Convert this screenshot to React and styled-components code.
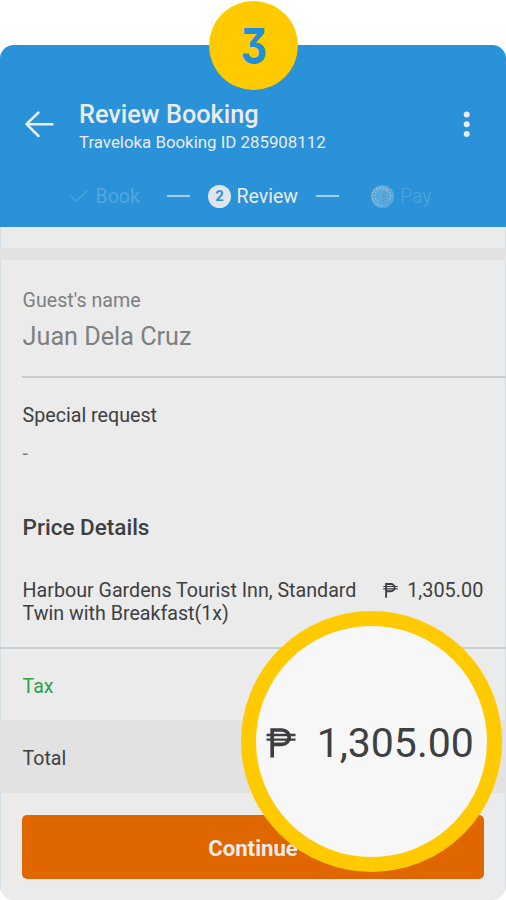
import styled, { createGlobalStyle } from 'styled-components'

const GlobalStyle = createGlobalStyle`
  * { box-sizing: border-box; }
  body {
    margin: 0;
    background: #fff;
    font-family: Roboto, "Liberation Sans", sans-serif;
  }
`

const Page = styled.div`
  position: relative;
  width: 506px;
  height: 900px;
  padding-top: 45px;
  overflow: hidden;
`

const Phone = styled.main`
  display: flex;
  flex-direction: column;
  height: 855px;
  border-radius: 14px;
  overflow: hidden;
  background: #ebebeb;
  color: #3d3f41;
`

const Header = styled.header`
  height: 182px;
  padding-top: 55px;
  background: #2992d9;
  color: #ebebeb;
`

const Content = styled.div`
  flex: 1;
  display: flex;
  flex-direction: column;
  box-shadow: inset 1px 0 #d5dfe8, inset -1px 0 #d5dfe8;
`

const TopBar = styled.div`
  display: flex;
  align-items: flex-start;
  padding: 0 35px 0 24px;
  height: 81px;
`

const BackIcon = styled.svg`
  width: 31px;
  height: 28px;
  margin: 10px 24px 0 0;
`

const Titles = styled.div`
  flex: 1;
`

const Title = styled.h1`
  margin: 0;
  font-size: 25.3px;
  line-height: 29px;
  font-weight: 500;
`

const BookingId = styled.div`
  font-size: 16.85px;
  line-height: 27px;
`

const MenuIcon = styled.svg`
  width: 8px;
  height: 28px;
  margin-top: 10px;
`

const Steps = styled.div`
  display: flex;
  align-items: center;
  height: 30px;
  padding-left: 70px;
  font-size: 19.5px;
`

const Step = styled.div`
  display: flex;
  align-items: center;
  gap: ${props => props.gap || 5.5}px;
  width: ${props => props.width}px;
  color: ${props => props.dim ? '#50a6df' : '#ebebeb'};
  font-weight: ${props => props.thin ? 300 : 400};
`

const StepNumber = styled.span`
  width: 23px;
  height: 23px;
  border-radius: 50%;
  background: #dfe5ea;
  color: #2992d9;
  font-size: 15px;
  line-height: 23px;
  font-weight: 700;
  text-align: center;
`

const Dash = styled.span`
  width: 23px;
  height: 2px;
  margin: 0 ${props => props.after}px 1px 0;
  background: #a9cfeb;
`

const Band = styled.div`
  height: 12px;
  margin-top: 21px;
  background: #e2e2e2;
`

const Guest = styled.section`
  height: 118px;
  margin-left: 22px;
  padding: 28px 0 0 0.6px;
  border-bottom: 2px solid #c8cdd1;
  color: #7d8081;
`

const Text = styled.div`
  font-size: ${props => props.size || 19.65}px;
  line-height: ${props => props.line || 25}px;
  font-weight: ${props => props.weight || 400};
  color: ${props => props.color || 'inherit'};
`

const Request = styled.section`
  height: 123px;
  padding: 25px 22.6px 0;
`

const Price = styled.section`
  height: 148px;
  padding: 13px 22.6px 0;
  border-bottom: 2px solid #c3d0da;
`

const PriceRow = styled.div`
  display: flex;
  justify-content: space-between;
  margin-top: 38px;
  font-size: 19.65px;
  line-height: 23px;
`

const RoomName = styled.div`
  width: 345px;
`

const Amount = styled.div`
  display: flex;
  align-items: center;
  gap: ${props => props.gap}px;
  height: 23px;
  font-size: ${props => props.size}px;
  white-space: nowrap;
`

const Peso = styled.svg`
  width: ${props => props.w}px;
  height: ${props => props.h}px;
`

const SummaryRow = styled.div`
  display: flex;
  align-items: center;
  height: ${props => props.h}px;
  padding: 3px 22.6px 0;
  font-size: 19.5px;
  background: ${props => props.shade ? '#e2e2e2' : 'transparent'};
  color: ${props => props.shade ? 'inherit' : '#2ba148'};
`

const Continue = styled.button`
  height: 64px;
  margin: 22px 22px 0 22px;
  padding: 2px 0 0;
  border: 0;
  border-radius: 5px;
  background: #e06600;
  color: #ebebeb;
  font: 700 22.2px Roboto, "Liberation Sans", sans-serif;
`

const StepBadge = styled.div`
  position: absolute;
  top: 1px;
  left: 209px;
  width: 89px;
  height: 89px;
  border-radius: 50%;
  background: #ffcb00;
  color: #1f8fd8;
  font-family: Inter, sans-serif;
  font-feature-settings: "cv09";
  font-size: 49px;
  line-height: 91px;
  font-weight: 700;
  text-align: center;
`

const BadgeNumber = styled.span`
  display: inline-block;
  transform: scaleX(0.84);
`

// magnifier over the total
const Magnifier = styled.div`
  position: absolute;
  top: 611px;
  left: 241px;
  display: flex;
  align-items: center;
  justify-content: center;
  width: 261px;
  height: 261px;
  padding: 2px 3px 0 0;
  border: 15px solid #ffcb00;
  border-radius: 50%;
  background: #f7f7f7;
  color: #3d3f41;
`

function PesoSign({ w, h }) {
  return (
    <Peso w={w} h={h} viewBox="0 0 30 30" fill="none" stroke="#3d3f41">
      <path d="M6.2 29.5V2H16a7.2 7.2 0 0 1 0 14.4H6" strokeWidth="3.7" />
      <path d="M0.5 7H29.5M0.5 11.6H29.5" strokeWidth="2.4" />
    </Peso>
  )
}

function App() {
  return (
    <Page>
      <GlobalStyle />
      <Phone>
        <Header>
          <TopBar>
            <BackIcon viewBox="0 0 31 28" fill="none" stroke="#ebebeb" strokeWidth="2.5">
              <path d="M14.5 2.5 2.5 14.2 14.5 26M2.5 14.2H28.5" strokeLinecap="round" strokeLinejoin="round" />
            </BackIcon>
            <Titles>
              <Title>Review Booking</Title>
              <BookingId>Traveloka Booking ID 285908112</BookingId>
            </Titles>
            <MenuIcon viewBox="0 0 8 28" fill="#ebebeb">
              <circle cx="3.7" cy="4.5" r="3" />
              <circle cx="3.7" cy="14.2" r="3" />
              <circle cx="3.7" cy="24" r="3" />
            </MenuIcon>
          </TopBar>
          <Steps>
            <Step dim width={97} gap={7.5}>
              <svg width="18" height="14" viewBox="0 0 18 14" fill="none" stroke="#50a6df">
                <path d="M1 7 6.3 12.2 16.8 2" strokeWidth="1.3" />
              </svg>
              Book
            </Step>
            <Dash after={18} />
            <Step width={108}>
              <StepNumber>2</StepNumber>
              Review
            </Step>
            <Dash after={32} />
            <Step dim thin gap={6}>
              <svg width="23" height="23" viewBox="0 0 23 23">
                <circle cx="11.5" cy="11.5" r="11.5" fill="#59a9df" />
                <g fill="none" stroke="#d2cdc8" strokeWidth="1.2" strokeDasharray="0.1 3" strokeLinecap="round">
                  <path d="M19 14A9.2 9.2 0 1 0 11 20.5" />
                  <path d="M15.5 5.5A6.8 6.8 0 1 0 9 17" />
                </g>
                <path d="M12.5 9v7M14.5 8v8" stroke="#2992d9" strokeDasharray="1 2" />
              </svg>
              Pay
            </Step>
          </Steps>
        </Header>
        <Content>
          <Band />
          <Guest>
            <Text>Guest's name</Text>
            <Text size={25.2} line={47}>Juan Dela Cruz</Text>
          </Guest>
          <Request>
            <Text>Special request</Text>
            <Text line={52} color="#7d8081">-</Text>
          </Request>
          <Price>
            <Text size={22.5} line={27} weight={500}>Price Details</Text>
            <PriceRow>
              <RoomName>Harbour Gardens Tourist Inn, Standard Twin with Breakfast(1x)</RoomName>
              <Amount size={19.9} gap={9}>
                <PesoSign w={15} h={15} />
                1,305.00
              </Amount>
            </PriceRow>
          </Price>
          <SummaryRow h={71}>Tax</SummaryRow>
          <SummaryRow h={73} shade>Total</SummaryRow>
          <Continue>Continue</Continue>
        </Content>
      </Phone>
      <StepBadge>
        <BadgeNumber>3</BadgeNumber>
      </StepBadge>
      <Magnifier>
        <Amount size={41} gap={20.5}>
          <PesoSign w={30} h={30} />
          1,305.00
        </Amount>
      </Magnifier>
    </Page>
  )
}

export default App
